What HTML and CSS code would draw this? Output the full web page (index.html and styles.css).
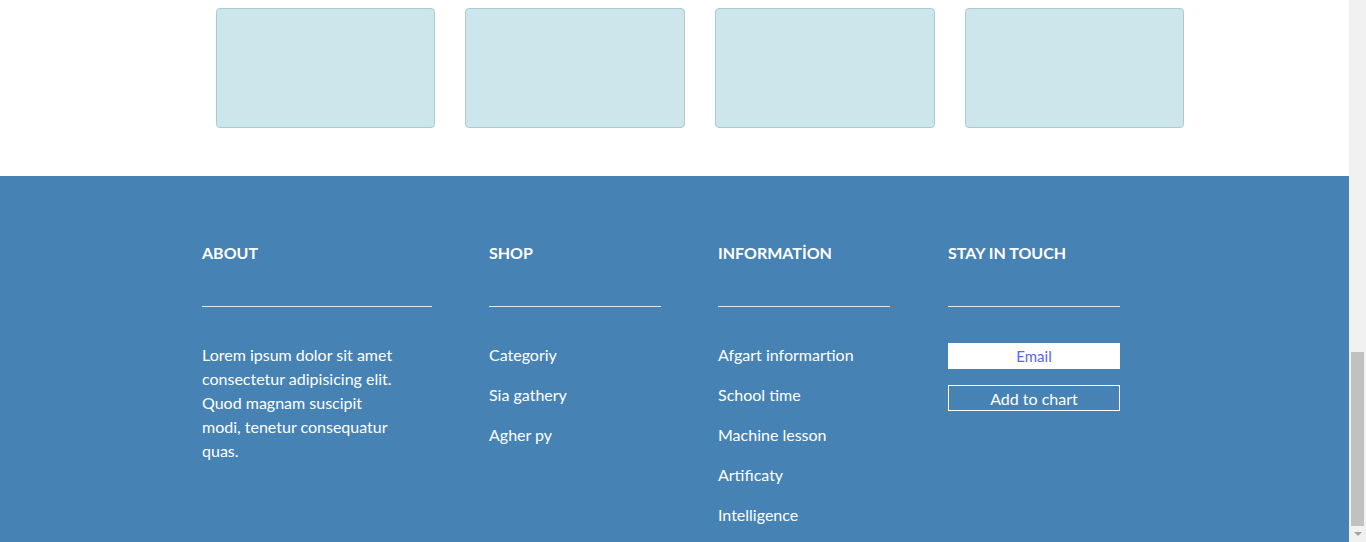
FILE: index.html
```html
<!DOCTYPE html>
<html lang="en">
<head>
<meta charset="utf-8">
<title>Footer</title>
<link rel="stylesheet" href="styles.css">
</head>
<body>
<div class="viewport">
  <main class="page">
    <section class="cards">
      <div class="card"></div>
      <div class="card"></div>
      <div class="card"></div>
      <div class="card"></div>
    </section>
    <footer class="footer">
      <div class="col">
        <h3 class="col-title">ABOUT</h3>
        <hr class="rule">
        <p class="about-text">Lorem ipsum dolor sit amet consectetur adipisicing elit. Quod magnam suscipit modi, tenetur consequatur quas.</p>
      </div>
      <div class="col">
        <h3 class="col-title">SHOP</h3>
        <hr class="rule">
        <ul class="links">
          <li><a href="#">Categoriy</a></li>
          <li><a href="#">Sia gathery</a></li>
          <li><a href="#">Agher py</a></li>
        </ul>
      </div>
      <div class="col">
        <h3 class="col-title">INFORMATİON</h3>
        <hr class="rule">
        <ul class="links">
          <li><a href="#">Afgart informartion</a></li>
          <li><a href="#">School time</a></li>
          <li><a href="#">Machine lesson</a></li>
          <li><a href="#">Artificaty</a></li>
          <li><a href="#">Intelligence</a></li>
        </ul>
      </div>
      <div class="col">
        <h3 class="col-title">STAY IN TOUCH</h3>
        <hr class="rule">
        <form class="touch">
          <input class="email" type="text" value="Email">
          <button class="add-btn" type="button">Add to chart</button>
        </form>
      </div>
    </footer>
  </main>
  <div class="scrollbar">
    <div class="track"></div>
    <div class="thumb"></div>
    <div class="arrow-down"></div>
  </div>
</div>
</body>
</html>
```
FILE: styles.css
```css
* { box-sizing: border-box; }
html, body { margin: 0; padding: 0; height: 100%; overflow: hidden; }
body { font-family: Lato, "Open Sans", sans-serif; background: #fff; }

.viewport { display: flex; height: 542px; }
.page { flex: 1; display: flex; flex-direction: column; min-width: 0; }

.cards {
  display: grid;
  grid-template-columns: 219px 220px 220px 219px;
  column-gap: 30px;
  padding: 8px 0 48px 216px;
}
.card {
  height: 120px;
  background: #cde6eb;
  border: 1px solid #a9cbd2;
  border-radius: 4px;
}

.footer {
  flex: 1;
  background: #4682b4;
  color: #fff;
  display: grid;
  grid-template-columns: 287px 229px 230px 172px;
  padding: 65px 0 0 202px;
}
.col-title {
  margin: 0;
  font-size: 16px;
  line-height: 24px;
  font-weight: 700;
  letter-spacing: 0;
}
.rule {
  margin: 41px 0 36px;
  border: 0;
  height: 1px;
  background: #e6e6e6;
  width: 172px;
}
.col:first-child .rule { width: 230px; }

.about-text {
  margin: 0;
  width: 197px;
  font-size: 16px;
  line-height: 24px;
}
.links {
  list-style: none;
  margin: 0;
  padding: 0;
  display: flex;
  flex-direction: column;
  gap: 16px;
}
.links a {
  color: #fff;
  text-decoration: none;
  font-size: 16px;
  line-height: 24px;
}
.touch { display: flex; flex-direction: column; gap: 16px; width: 172px; }
.email {
  height: 26px;
  border: 0;
  background: #fff;
  color: #5a63f2;
  text-align: center;
  font: 15px Lato, "Open Sans", sans-serif;
  padding: 0;
}
.add-btn {
  height: 26px;
  border: 1px solid #fff;
  background: transparent;
  color: #fff;
  font: 16px Lato, "Open Sans", sans-serif;
  padding: 0;
}

.scrollbar {
  width: 17px;
  background: #f1f1f1;
  display: flex;
  flex-direction: column;
  align-items: center;
}
.track { height: 352px; }
.thumb { width: 13px; height: 174px; background: #c1c1c1; }
.arrow-down {
  margin-top: 6px;
  width: 0; height: 0;
  border-left: 4px solid transparent;
  border-right: 4px solid transparent;
  border-top: 4px solid #a3a3a3;
}
```
